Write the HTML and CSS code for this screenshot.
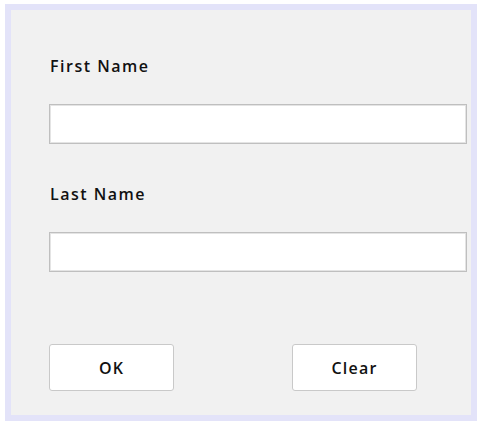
FILE: index.html
```html
<!DOCTYPE html>
<html>
<head>
<meta charset="utf-8">
<link rel="stylesheet" href="styles.css">
</head>
<body>
<div class="frame">
  <form class="form">
    <label class="label label-first">First Name</label>
    <input class="field" type="text">
    <label class="label label-last">Last Name</label>
    <input class="field" type="text">
    <div class="buttons">
      <button type="button" class="btn">OK</button>
      <button type="button" class="btn">Clear</button>
    </div>
  </form>
</div>
</body>
</html>
```
FILE: styles.css
```css
html, body {
  margin: 0;
  padding: 0;
  background: #ffffff;
}
.frame {
  box-sizing: border-box;
  margin: 4px 0 0 5px;
  width: 472px;
  height: 417px;
  border: 6px solid #e3e3f9;
  background: #f1f1f1;
  padding: 46px 5px 0 38px;
  font-family: "Open Sans", "DejaVu Sans", sans-serif;
  color: #111111;
}
.form {
  display: flex;
  flex-direction: column;
  align-items: flex-start;
}
.label {
  font-size: 16px;
  font-weight: 600;
  line-height: 20px;
  letter-spacing: 1.5px;
  margin-left: 1px;
}
.label-first {
  margin-bottom: 28px;
}
.label-last {
  margin-top: 40px;
  margin-bottom: 28px;
}
.field {
  box-sizing: border-box;
  width: 418px;
  height: 40px;
  margin: 0;
  border: 1px solid #bfbfbf;
  box-shadow: inset 0 0 0 1px #e4e4e4;
  background: #ffffff;
  outline: none;
}
.buttons {
  display: flex;
  gap: 118px;
  margin-top: 72px;
}
.btn {
  box-sizing: border-box;
  width: 125px;
  height: 47px;
  border: 1px solid #c9c9c9;
  border-radius: 3px;
  background: #ffffff;
  font-family: "Open Sans", "DejaVu Sans", sans-serif;
  font-size: 16px;
  font-weight: 600;
  letter-spacing: 1.2px;
  color: #111111;
  padding: 0;
}
```
